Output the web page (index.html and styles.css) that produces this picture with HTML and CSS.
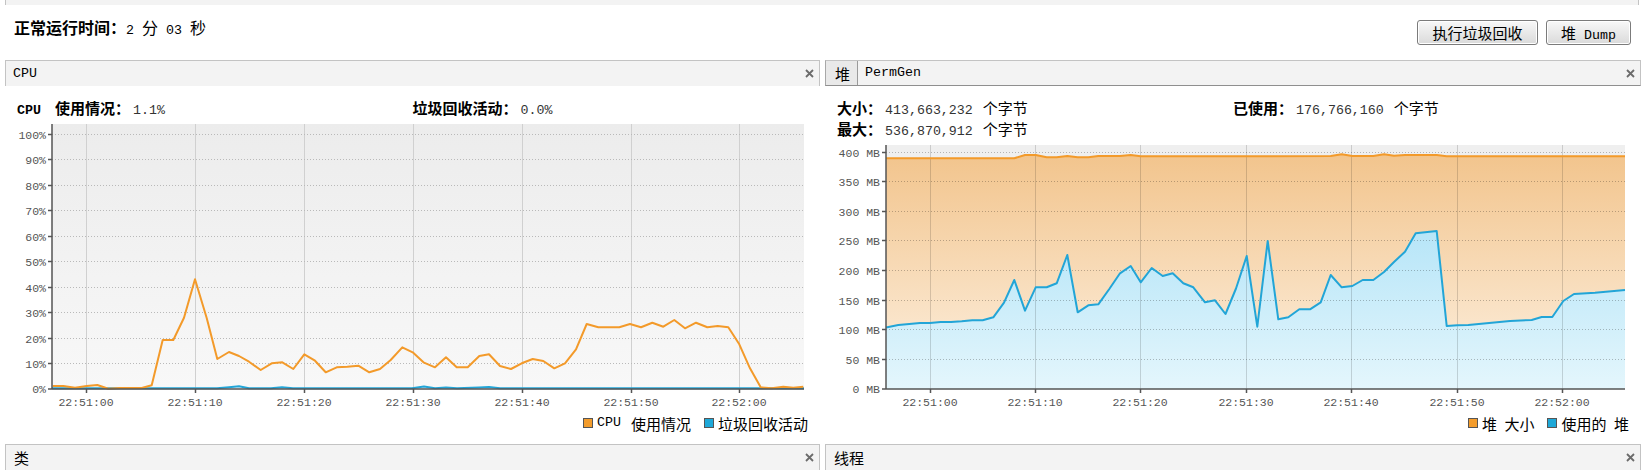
FILE: index.html
```html
<!DOCTYPE html>
<html lang="zh-CN">
<head>
    <meta charset="UTF-8">
    <title>监视</title>
    <link rel="stylesheet" href="styles.css">
</head>
<body>

    <div class="top-strip"></div>

    <div class="uptime-bar">
        <div class="uptime"><b>正常运行时间：</b><span class="en">2 </span>分<span class="en"> 03 </span>秒</div>
        <div class="actions">
            <button class="btn btn-gc">执行垃圾回收</button>
            <button class="btn btn-dump">堆<span class="en"> Dump</span></button>
        </div>
    </div>

    <div class="panels">
        <!-- CPU -->
        <section class="panel panel-left">
            <div class="panel-head">
                <span class="title en">CPU</span>
                <svg class="close" width="9" height="9" viewBox="0 0 9 9"><path d="M1 1L8 8M8 1L1 8"/></svg>
            </div>
            <div class="info">
                <div><b><span class="en sp">CPU</span>使用情况：</b><span class="val">1.1%</span></div>
                <div><b>垃圾回收活动：</b><span class="val">0.0%</span></div>
            </div>
            <svg class="chart" width="815" height="294" viewBox="0 0 815 294">
                <defs>
                    <linearGradient id="cpuBg" x1="0" y1="0" x2="0" y2="1">
                        <stop offset="0" stop-color="#ececec"/>
                        <stop offset="1" stop-color="#f8f8f8"/>
                    </linearGradient>
                </defs>
                <rect x="47" y="6" width="752" height="265" fill="url(#cpuBg)"/>
                <g class="vgrid">
                    <line x1="81.5" y1="6" x2="81.5" y2="271"/>
                    <line x1="190.5" y1="6" x2="190.5" y2="271"/>
                    <line x1="299.5" y1="6" x2="299.5" y2="271"/>
                    <line x1="408.5" y1="6" x2="408.5" y2="271"/>
                    <line x1="517.5" y1="6" x2="517.5" y2="271"/>
                    <line x1="626.5" y1="6" x2="626.5" y2="271"/>
                    <line x1="734.5" y1="6" x2="734.5" y2="271"/>
                </g>
                <g class="hgrid">
                    <line x1="47" y1="16.5" x2="799" y2="16.5"/>
                    <line x1="47" y1="41.5" x2="799" y2="41.5"/>
                    <line x1="47" y1="67.5" x2="799" y2="67.5"/>
                    <line x1="47" y1="92.5" x2="799" y2="92.5"/>
                    <line x1="47" y1="118.5" x2="799" y2="118.5"/>
                    <line x1="47" y1="143.5" x2="799" y2="143.5"/>
                    <line x1="47" y1="169.5" x2="799" y2="169.5"/>
                    <line x1="47" y1="194.5" x2="799" y2="194.5"/>
                    <line x1="47" y1="220.5" x2="799" y2="220.5"/>
                    <line x1="47" y1="245.5" x2="799" y2="245.5"/>
                </g>
                <polyline class="line-blue" points="47,270.3 212,270.3 224,269.3 234,268.3 244,270.3 266,270.3 277,269.3 288,270.3 407,270.3 419,268.5 430,270.3 441,269.5 452,270.3 474,269.5 484,269 495,270.3 799,270.3"/>
                <polyline class="line-orange" points="47.7,268 58.3,268 70,269.7 81.7,268 92.3,267 103.3,270.7 115,270 125,270 136.7,270 146.7,267.3 157.7,222 168.3,222 179,199.7 190,161.3 201.7,200 212.3,241 224,234 234,238 244,243.7 255.7,252 266.7,245.3 277.3,244.3 288.3,251 299.3,236.3 310,242.7 320.7,254.3 331.7,249.3 342.3,248.7 353.3,247.7 364.3,254.3 375,251 385.7,242 397.3,229.3 407.7,234.3 419,244.7 430,249.3 441,239.3 451.7,249.3 462.7,249.3 474.3,238 484,236.3 495,248 506,251 516.7,245.3 527.7,241 538.3,243 549.3,250.3 560,245.3 571,231.3 581.7,206 593.3,209.3 604.3,209.3 614.3,209.3 625,206 636,209.3 647.3,204.7 658.3,208.7 669.3,202 680,210.3 691,204.7 702.3,209.3 712.7,208 723.3,209.3 734.3,226.3 745,250.3 755.7,269.3 766.7,270.3 778.3,268.7 788.3,269.7 798.3,268.7"/>
                <g class="axis">
                    <line x1="47" y1="6" x2="47" y2="271"/>
                    <line x1="47" y1="271" x2="799" y2="271"/>
                    <line x1="43" y1="16.5" x2="47" y2="16.5"/>
                    <line x1="43" y1="41.5" x2="47" y2="41.5"/>
                    <line x1="43" y1="67.5" x2="47" y2="67.5"/>
                    <line x1="43" y1="92.5" x2="47" y2="92.5"/>
                    <line x1="43" y1="118.5" x2="47" y2="118.5"/>
                    <line x1="43" y1="143.5" x2="47" y2="143.5"/>
                    <line x1="43" y1="169.5" x2="47" y2="169.5"/>
                    <line x1="43" y1="194.5" x2="47" y2="194.5"/>
                    <line x1="43" y1="220.5" x2="47" y2="220.5"/>
                    <line x1="43" y1="245.5" x2="47" y2="245.5"/>
                    <line x1="43" y1="271" x2="47" y2="271"/>
                    <line x1="81.5" y1="271" x2="81.5" y2="275"/>
                    <line x1="190.5" y1="271" x2="190.5" y2="275"/>
                    <line x1="299.5" y1="271" x2="299.5" y2="275"/>
                    <line x1="408.5" y1="271" x2="408.5" y2="275"/>
                    <line x1="517.5" y1="271" x2="517.5" y2="275"/>
                    <line x1="626.5" y1="271" x2="626.5" y2="275"/>
                    <line x1="734.5" y1="271" x2="734.5" y2="275"/>
                </g>
                <g class="ylabels">
                    <text x="41" y="20.5">100%</text>
                    <text x="41" y="45.5">90%</text>
                    <text x="41" y="71.5">80%</text>
                    <text x="41" y="96.5">70%</text>
                    <text x="41" y="122.5">60%</text>
                    <text x="41" y="147.5">50%</text>
                    <text x="41" y="173.5">40%</text>
                    <text x="41" y="198.5">30%</text>
                    <text x="41" y="224.5">20%</text>
                    <text x="41" y="249.5">10%</text>
                    <text x="41" y="275">0%</text>
                </g>
                <g class="xlabels">
                    <text x="81" y="288">22:51:00</text>
                    <text x="190" y="288">22:51:10</text>
                    <text x="299" y="288">22:51:20</text>
                    <text x="408" y="288">22:51:30</text>
                    <text x="517" y="288">22:51:40</text>
                    <text x="626" y="288">22:51:50</text>
                    <text x="734" y="288">22:52:00</text>
                </g>
            </svg>
            <div class="legend">
                <span class="swatch orange"></span><span class="en sp-legend">CPU</span>使用情况
                <span class="swatch blue"></span>垃圾回收活动
            </div>
        </section>

        <!-- 堆 -->
        <section class="panel panel-right">
            <div class="panel-head tabs-head">
                <span class="tab tab-active">堆</span>
                <span class="tab title en">PermGen</span>
                <svg class="close" width="9" height="9" viewBox="0 0 9 9"><path d="M1 1L8 8M8 1L1 8"/></svg>
            </div>
            <div class="info">
                <div><b>大小：</b><span class="val">413,663,232</span><span class="unit">个字节</span></div>
                <div><b>已使用：</b><span class="val">176,766,160</span><span class="unit">个字节</span></div>
                <div><b>最大：</b><span class="val">536,870,912</span><span class="unit">个字节</span></div>
            </div>
            <svg class="chart" width="816" height="273" viewBox="0 0 816 273">
                <defs>
                    <linearGradient id="sizeFill" gradientUnits="userSpaceOnUse" x1="0" y1="13" x2="0" y2="250">
                        <stop offset="0" stop-color="#f2c48c"/>
                        <stop offset="1" stop-color="#fdf1e2"/>
                    </linearGradient>
                    <linearGradient id="usedFill" gradientUnits="userSpaceOnUse" x1="0" y1="90" x2="0" y2="250">
                        <stop offset="0" stop-color="#b6e5f8"/>
                        <stop offset="1" stop-color="#e4f6fc"/>
                    </linearGradient>
                </defs>
                <rect x="61" y="6" width="739" height="244" fill="#efefef"/>
                <polygon fill="url(#sizeFill)" points="61,19.3 189.3,19.3 200,16 210.7,16 221.7,18.3 231.7,18.3 242.3,17 252.7,18.3 263.3,18.3 273.3,17 295,17 305.7,16 315.7,17.3 400,17.3 505.7,17 516.7,15.3 527.3,17 548.3,17 559,15.3 569,16.7 580,16 611.7,16 621.7,17.3 800,17.3 800,250 61,250"/>
                <polygon fill="url(#usedFill)" points="61,188.5 73.3,186 84.3,185 95,184 105,184 115.7,183 126,183 136.7,182.3 147.3,181.3 157.7,181.3 168.3,178.3 179,163.7 189.3,141 200,171.7 210.7,148.3 221.7,148.3 231.7,144.3 242.3,116 252.7,173.3 263.3,166.3 273.3,165.3 284.3,150 295,134.3 305.7,127 315.7,143.3 326.7,129 337.7,137 347.7,134.3 358.3,144.3 368.3,148.3 380,163.3 390,161.3 400.5,175 411,149.5 421.7,117 432.3,187.7 442.7,102 453.3,180.3 463.3,178.3 474.3,170.3 485,170.3 495.7,163.3 505.7,136 516.7,148.3 527.3,147 537.7,141 548.3,141 559,133 569,123 580,112.7 590.7,94.3 611.7,92 621.7,187 632.3,186.3 643.3,186 685,182 706.7,181 716.7,178 727.3,178 738.3,162 749,155 770,153.7 800,151 800,250 61,250"/>
                <g class="vgrid heap">
                    <line x1="105.5" y1="6" x2="105.5" y2="250"/>
                    <line x1="210.5" y1="6" x2="210.5" y2="250"/>
                    <line x1="315.5" y1="6" x2="315.5" y2="250"/>
                    <line x1="421.5" y1="6" x2="421.5" y2="250"/>
                    <line x1="526.5" y1="6" x2="526.5" y2="250"/>
                    <line x1="632.5" y1="6" x2="632.5" y2="250"/>
                    <line x1="737.5" y1="6" x2="737.5" y2="250"/>
                </g>
                <g class="hgrid heap">
                    <line x1="61" y1="13.5" x2="800" y2="13.5"/>
                    <line x1="61" y1="42.5" x2="800" y2="42.5"/>
                    <line x1="61" y1="72.5" x2="800" y2="72.5"/>
                    <line x1="61" y1="101.5" x2="800" y2="101.5"/>
                    <line x1="61" y1="131.5" x2="800" y2="131.5"/>
                    <line x1="61" y1="161.5" x2="800" y2="161.5"/>
                    <line x1="61" y1="190.5" x2="800" y2="190.5"/>
                    <line x1="61" y1="220.5" x2="800" y2="220.5"/>
                </g>
                <polyline class="line-orange" points="61,19.3 189.3,19.3 200,16 210.7,16 221.7,18.3 231.7,18.3 242.3,17 252.7,18.3 263.3,18.3 273.3,17 295,17 305.7,16 315.7,17.3 400,17.3 505.7,17 516.7,15.3 527.3,17 548.3,17 559,15.3 569,16.7 580,16 611.7,16 621.7,17.3 800,17.3"/>
                <polyline class="line-blue" points="61,188.5 73.3,186 84.3,185 95,184 105,184 115.7,183 126,183 136.7,182.3 147.3,181.3 157.7,181.3 168.3,178.3 179,163.7 189.3,141 200,171.7 210.7,148.3 221.7,148.3 231.7,144.3 242.3,116 252.7,173.3 263.3,166.3 273.3,165.3 284.3,150 295,134.3 305.7,127 315.7,143.3 326.7,129 337.7,137 347.7,134.3 358.3,144.3 368.3,148.3 380,163.3 390,161.3 400.5,175 411,149.5 421.7,117 432.3,187.7 442.7,102 453.3,180.3 463.3,178.3 474.3,170.3 485,170.3 495.7,163.3 505.7,136 516.7,148.3 527.3,147 537.7,141 548.3,141 559,133 569,123 580,112.7 590.7,94.3 611.7,92 621.7,187 632.3,186.3 643.3,186 685,182 706.7,181 716.7,178 727.3,178 738.3,162 749,155 770,153.7 800,151"/>
                <g class="axis">
                    <line x1="61" y1="6" x2="61" y2="250"/>
                    <line x1="61" y1="250" x2="800" y2="250"/>
                    <line x1="57" y1="13.5" x2="61" y2="13.5"/>
                    <line x1="57" y1="42.5" x2="61" y2="42.5"/>
                    <line x1="57" y1="72.5" x2="61" y2="72.5"/>
                    <line x1="57" y1="101.5" x2="61" y2="101.5"/>
                    <line x1="57" y1="131.5" x2="61" y2="131.5"/>
                    <line x1="57" y1="161.5" x2="61" y2="161.5"/>
                    <line x1="57" y1="190.5" x2="61" y2="190.5"/>
                    <line x1="57" y1="220.5" x2="61" y2="220.5"/>
                    <line x1="57" y1="250" x2="61" y2="250"/>
                    <line x1="105.5" y1="250" x2="105.5" y2="254"/>
                    <line x1="210.5" y1="250" x2="210.5" y2="254"/>
                    <line x1="315.5" y1="250" x2="315.5" y2="254"/>
                    <line x1="421.5" y1="250" x2="421.5" y2="254"/>
                    <line x1="526.5" y1="250" x2="526.5" y2="254"/>
                    <line x1="632.5" y1="250" x2="632.5" y2="254"/>
                    <line x1="737.5" y1="250" x2="737.5" y2="254"/>
                </g>
                <g class="ylabels">
                    <text x="55" y="17.5">400 MB</text>
                    <text x="55" y="46.5">350 MB</text>
                    <text x="55" y="76.5">300 MB</text>
                    <text x="55" y="105.5">250 MB</text>
                    <text x="55" y="135.5">200 MB</text>
                    <text x="55" y="165.5">150 MB</text>
                    <text x="55" y="194.5">100 MB</text>
                    <text x="55" y="224.5">50 MB</text>
                    <text x="55" y="254">0 MB</text>
                </g>
                <g class="xlabels">
                    <text x="105" y="267">22:51:00</text>
                    <text x="210" y="267">22:51:10</text>
                    <text x="315" y="267">22:51:20</text>
                    <text x="421" y="267">22:51:30</text>
                    <text x="526" y="267">22:51:40</text>
                    <text x="632" y="267">22:51:50</text>
                    <text x="737" y="267">22:52:00</text>
                </g>
            </svg>
            <div class="legend">
                <span class="swatch orange"></span>堆&ensp;大小
                <span class="swatch blue"></span>使用的&ensp;堆
            </div>
        </section>
    </div>

    <div class="panels bottom">
        <section class="panel panel-left">
            <div class="panel-head">
                <span class="title cjk">类</span>
                <svg class="close" width="9" height="9" viewBox="0 0 9 9"><path d="M1 1L8 8M8 1L1 8"/></svg>
            </div>
        </section>
        <section class="panel panel-right">
            <div class="panel-head">
                <span class="title cjk">线程</span>
                <svg class="close" width="9" height="9" viewBox="0 0 9 9"><path d="M1 1L8 8M8 1L1 8"/></svg>
            </div>
        </section>
    </div>

</body>
</html>
```

FILE: styles.css
```css
body {
    margin: 0;
    font-family: "Noto Sans CJK SC", "Liberation Sans", sans-serif;
    font-size: 15px;
    color: #000;
    background: #fff;
}

.en,
.val {
    font-family: "Liberation Mono", "Noto Sans CJK SC", monospace;
    font-size: 13.3px;
    line-height: 1;
}

.top-strip {
    height: 5px;
    margin: 0 9px 0 5px;
    background: #f3f3f3;
    border-left: 1px solid #c3c3c3;
    border-right: 1px solid #c3c3c3;
}

.uptime-bar {
    height: 55px;
    box-sizing: border-box;
    display: flex;
    align-items: center;
    justify-content: space-between;
    padding: 0 17px 0 14px;
}

.uptime {
    font-size: 16px;
    line-height: 20px;
    margin-bottom: 10px;
}

.actions {
    display: flex;
    gap: 8px;
}

.btn {
    height: 25px;
    padding: 0;
    font-family: inherit;
    font-size: 15px;
    line-height: 23px;
    color: #000;
    border: 1px solid #7b7b7b;
    border-radius: 3px;
    background: linear-gradient(#f8f8f8, #dadada);
    box-shadow: inset 0 0 0 1px #fff;
}

.btn-gc {
    width: 121px;
}

.btn-dump {
    width: 85px;
}

.panels {
    display: flex;
    gap: 5px;
    padding-left: 5px;
}

.panels.bottom {
    margin-top: 10px;
}

.panel-left {
    width: 815px;
}

.panel-right {
    width: 816px;
}

.panel-head {
    height: 26px;
    box-sizing: border-box;
    display: flex;
    align-items: center;
    padding: 0 5px 0 7px;
    background: #f3f3f3;
    border: 1px solid #c3c3c3;
    border-bottom: 0;
}

.panel-head .title {
    flex: 1;
}

.panel-head .cjk {
    padding-left: 1px;
}

.tabs-head {
    padding-left: 0;
    border-left-color: #a8a8a8;
    border-bottom: 1px solid #8f8f8f;
}

.tab {
    height: 100%;
    display: flex;
    align-items: center;
    padding: 0 7px;
}

.tab-active {
    padding-left: 9px;
    background: #e9e9e9;
    border-right: 1px solid #9a9a9a;
}

.close {
    display: block;
}

.close path {
    stroke: #6b6b6b;
    stroke-width: 1.8;
    fill: none;
}

.info {
    display: grid;
    grid-template-columns: 1fr 1fr;
    padding: 11px 12px 0;
    line-height: 21px;
}

.info .sp {
    margin-right: 14px;
}

.val {
    color: #333;
    margin-left: 3px;
}

.unit {
    margin-left: 10px;
}

.chart {
    display: block;
}

.vgrid line {
    stroke: #d0d0d0;
    stroke-width: 1;
}

.vgrid.heap line {
    stroke: rgba(0, 0, 0, 0.15);
}

.hgrid line {
    stroke: #b9b9b9;
    stroke-width: 1;
    stroke-dasharray: 1 2;
}

.hgrid.heap line {
    stroke: rgba(0, 0, 0, 0.25);
}

.line-orange,
.line-blue {
    fill: none;
    stroke-width: 2;
    stroke-linejoin: round;
}

.line-orange {
    stroke: #f39a2a;
}

.line-blue {
    stroke: #22a5d7;
}

.axis line {
    stroke: #555;
    stroke-width: 1.5;
}

.ylabels text,
.xlabels text {
    font-family: "Liberation Mono", monospace;
    font-size: 11.5px;
    fill: #555;
}

.ylabels text {
    text-anchor: end;
}

.xlabels text {
    text-anchor: middle;
}

.legend {
    height: 22px;
    display: flex;
    align-items: center;
    justify-content: flex-end;
    padding-right: 12px;
}

.swatch {
    width: 10px;
    height: 10px;
    box-sizing: border-box;
    margin: 0 4px 0 13px;
    border: 1px solid #555;
}

.swatch.orange {
    background: #f39c2c;
}

.swatch.blue {
    background: #1ea8d8;
}

.sp-legend {
    margin-right: 10px;
}
```
